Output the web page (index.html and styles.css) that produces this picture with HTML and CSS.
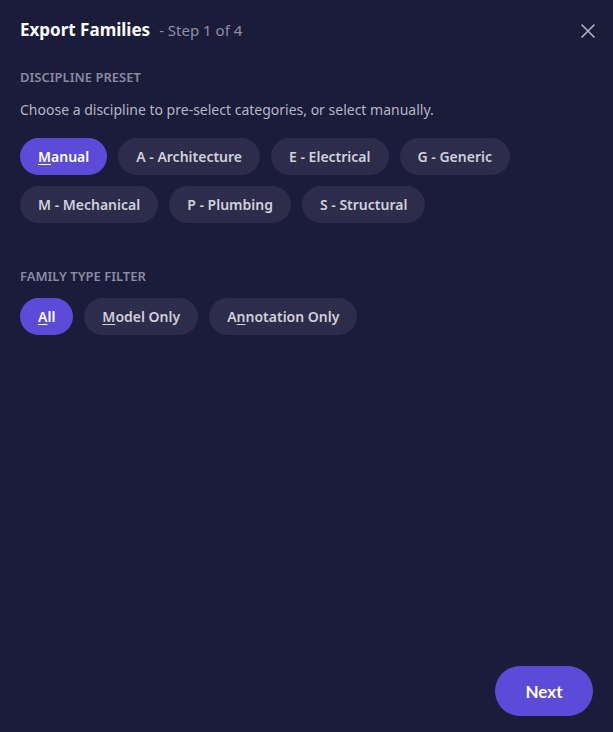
FILE: index.html
```html
<!DOCTYPE html>
<html lang="en">
<head>
    <meta charset="UTF-8">
    <title>Export Families</title>
    <link rel="stylesheet" href="styles.css">
</head>
<body>
    <div class="dialog">
        <div class="header">
            <h1 class="title">Export Families</h1>
            <span class="step">- Step 1 of 4</span>
            <button class="close" aria-label="Close">
                <svg width="14" height="14" viewBox="0 0 14 14"><path d="M1 1L13 13M13 1L1 13" stroke="#b4b4c4" stroke-width="1.6" stroke-linecap="round"/></svg>
            </button>
        </div>

        <div class="section">
            <p class="label">Discipline Preset</p>
            <p class="hint">Choose a discipline to pre-select categories, or select manually.</p>
            <div class="chips">
                <button class="chip active"><u>M</u>anual</button>
                <button class="chip">A - Architecture</button>
                <button class="chip">E - Electrical</button>
                <button class="chip">G - Generic</button>
                <button class="chip">M - Mechanical</button>
                <button class="chip">P - Plumbing</button>
                <button class="chip">S - Structural</button>
            </div>
        </div>

        <div class="section filter">
            <p class="label">Family Type Filter</p>
            <div class="chips">
                <button class="chip active"><u>A</u>ll</button>
                <button class="chip"><u>M</u>odel Only</button>
                <button class="chip">A<u>n</u>notation Only</button>
            </div>
        </div>

        <div class="footer">
            <button class="next">Next</button>
        </div>
    </div>
</body>
</html>
```

FILE: styles.css
```css
* {
    box-sizing: border-box;
}
html, body {
    margin: 0;
    padding: 0;
    height: 100%;
}
body {
    background: #1b1b3a;
    font-family: "Noto Sans", "Open Sans", sans-serif;
    color: #e4e4ec;
    overflow: hidden;
}
.dialog {
    height: 100%;
    display: flex;
    flex-direction: column;
    padding: 18px 20px 16px 20px;
}
.header {
    display: flex;
    align-items: baseline;
    height: 26px;
}
.title {
    margin: 0;
    font-size: 17px;
    font-weight: 700;
    color: #ffffff;
}
.step {
    margin-left: 9px;
    font-size: 15px;
    color: #8e8ea6;
}
.close {
    margin-left: auto;
    margin-right: -2px;
    background: none;
    border: none;
    padding: 0;
    cursor: pointer;
    align-self: center;
    display: flex;
}
.section {
    margin-top: 24px;
}
.label {
    margin: 0;
    font-size: 13px;
    font-weight: 600;
    text-transform: uppercase;
    color: #8a8aa2;
}
.hint {
    margin: 14px 0 0 0;
    font-size: 14px;
    color: #b6b6c8;
}
.chips {
    display: flex;
    flex-wrap: wrap;
    column-gap: 11px;
    row-gap: 11px;
    margin-top: 19px;
    max-width: 520px;
}
.chip {
    height: 37px;
    padding: 0 18px;
    border: none;
    border-radius: 19px;
    background: #2d2c4a;
    color: #d0d0dc;
    font-family: inherit;
    font-size: 14px;
    font-weight: 600;
    cursor: pointer;
}
.chip.active {
    background: #5b4bd8;
    color: #ffffff;
}
.chip u {
    text-underline-offset: 2px;
}
.filter {
    margin-top: 44px;
}
.filter .chips {
    margin-top: 13px;
}
.footer {
    margin-top: auto;
    display: flex;
    justify-content: flex-end;
}
.next {
    width: 98px;
    height: 50px;
    border: none;
    border-radius: 25px;
    background: #5b4bd8;
    color: #ffffff;
    font-family: Lato, sans-serif;
    font-size: 17px;
    font-weight: 700;
    cursor: pointer;
}
```
